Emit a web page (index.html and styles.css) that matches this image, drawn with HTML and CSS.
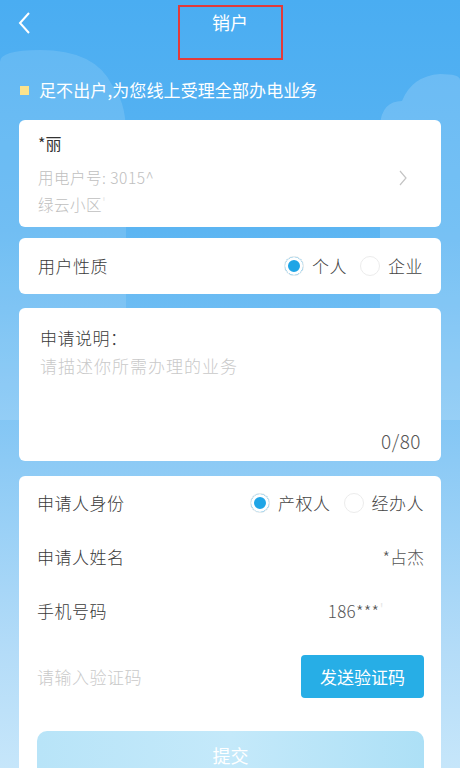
FILE: index.html
```html
<!DOCTYPE html>
<html lang="zh">
<head>
<meta charset="utf-8">
<link rel="stylesheet" href="styles.css">
</head>
<body>
<div class="page">
  <svg class="clouds" width="460" height="420" viewBox="0 0 460 420">
    <path d="M0,62 Q0,50 40,50 Q95,50 112,85 Q125,100 126,130 L126,420 L0,420 Z" fill="rgba(255,255,255,0.13)"/>
    <path d="M380,125 Q382,101 402,101 Q412,76 440,74 Q460,74 460,80 L460,420 L380,420 Z" fill="rgba(255,255,255,0.16)"/>
  </svg>
  <header class="header">
    <svg class="back" width="14" height="24" viewBox="0 0 14 24"><polyline points="11,2 2,12 11,22" fill="none" stroke="#fff" stroke-width="2"/></svg>
    <h1 class="title">销户</h1>
    <div class="mark"></div>
  </header>
  <div class="notice"><span class="dot"></span>足不出户,为您线上受理全部办电业务</div>

  <section class="card account">
    <div class="acc-info">
      <div class="acc-name">*丽</div>
      <div class="acc-sub">用电户号: 3015^</div>
      <div class="acc-sub addr">绿云小区<span class="faint">'</span></div>
    </div>
    <svg class="arrow" width="10" height="18" viewBox="0 0 10 18"><polyline points="2,2 8,9 2,16" fill="none" stroke="#c4c4c4" stroke-width="1.2"/></svg>
  </section>

  <section class="card row-card">
    <span class="label">用户性质</span>
    <div class="radios">
      <span class="radio on"></span><span class="opt">个人</span>
      <span class="radio"></span><span class="opt">企业</span>
    </div>
  </section>

  <section class="card desc">
    <div class="label">申请说明：</div>
    <div class="placeholder">请描述你所需办理的业务</div>
    <div class="count">0/80</div>
  </section>

  <section class="card form">
    <div class="frow">
      <span class="label">申请人身份</span>
      <div class="radios">
        <span class="radio on"></span><span class="opt">产权人</span>
        <span class="radio"></span><span class="opt">经办人</span>
      </div>
    </div>
    <div class="frow">
      <span class="label">申请人姓名</span>
      <span class="value">*占杰</span>
    </div>
    <div class="frow">
      <span class="label">手机号码</span>
      <span class="value phone">186***<span class="faint">'</span></span>
    </div>
    <div class="frow code">
      <span class="placeholder">请输入验证码</span>
      <button class="send">发送验证码</button>
    </div>
    <button class="submit">提交</button>
  </section>
</div>
</body>
</html>
```

FILE: styles.css
```css
* { box-sizing: border-box; }
html, body { margin: 0; padding: 0; }
body {
  width: 460px;
  height: 768px;
  overflow: hidden;
  font-family: "Noto Sans CJK SC", "Noto Sans", sans-serif;
  font-weight: 300;
  background: linear-gradient(180deg, #4aadf2 0%, #5cb5f2 30%, #8ccaf5 60%, #b4dcf8 85%, #c6e6fa 100%);
}
.page {
  position: relative;
  width: 460px;
  height: 768px;
}
.clouds {
  position: absolute;
  left: 0;
  top: 0;
  pointer-events: none;
}
.header {
  position: relative;
  height: 46px;
  display: flex;
  justify-content: center;
  align-items: flex-start;
}
.back {
  position: absolute;
  left: 18px;
  top: 11px;
}
.title {
  margin: 11px 0 0;
  font-size: 18px;
  line-height: 22px;
  font-weight: 400;
  color: #fff;
}
.mark {
  position: absolute;
  left: 178px;
  top: 5px;
  width: 105px;
  height: 55px;
  border: 2px solid #e23a3a;
}
.notice {
  position: relative;
  margin-top: 33px;
  padding-left: 20px;
  display: flex;
  align-items: center;
  gap: 10px;
  color: #fff;
  font-size: 17px;
  font-weight: 400;
  line-height: 22px;
  letter-spacing: 0.1px;
}
.dot {
  width: 9px;
  height: 9px;
  background: #fbe38d;
}
.card {
  position: relative;
  margin: 0 19px;
  background: #fff;
  border-radius: 6px;
}
.account {
  margin-top: 19px;
  padding: 12px 33px 12px 19px;
  display: flex;
  align-items: center;
  justify-content: space-between;
}
.acc-name {
  font-size: 16px;
  line-height: 22px;
  color: #333;
  font-weight: 400;
}
.acc-sub {
  margin-top: 12px;
  font-size: 15.5px;
  line-height: 22px;
  color: #c0c0c0;
  letter-spacing: 0.5px;
}
.acc-sub.addr { margin-top: 5px; }
.faint { color: #e6e6e6; }
.arrow { margin-top: 8px; }
.row-card {
  margin-top: 11px;
  height: 56px;
  padding: 0 18px 0 19px;
  display: flex;
  align-items: center;
  justify-content: space-between;
}
.label {
  font-size: 17px;
  line-height: 22px;
  color: #3a3a3a;
  letter-spacing: 0.5px;
}
.radios {
  display: flex;
  align-items: center;
}
.radio {
  width: 20px;
  height: 20px;
  border-radius: 50%;
  border: 1px solid #ececec;
  background: #fff;
  margin-right: 8px;
}
.radio.on {
  background: #1fa5e6;
  box-shadow: inset 0 0 0 3px #fff;
}
.opt {
  font-size: 17px;
  line-height: 22px;
  color: #444;
  letter-spacing: 0.5px;
  margin-right: 13px;
}
.opt:last-child { margin-right: 0; }
.desc {
  margin-top: 14px;
  height: 153px;
  padding: 19px 20px 9px 21px;
  display: flex;
  flex-direction: column;
}
.desc .placeholder {
  margin-top: 6px;
  font-size: 17px;
  letter-spacing: 1px;
}
.placeholder {
  font-size: 17px;
  line-height: 22px;
  color: #c9c9c9;
  letter-spacing: 0.5px;
}
.count {
  margin-top: auto;
  align-self: flex-end;
  font-size: 19px;
  line-height: 22px;
  color: #555;
  letter-spacing: 0.5px;
}
.form {
  margin-top: 15px;
  height: 320px;
  padding: 0 17px 0 18px;
  border-radius: 6px 6px 0 0;
}
.frow {
  height: 54px;
  display: flex;
  align-items: center;
  justify-content: space-between;
}
.value {
  font-size: 17px;
  line-height: 22px;
  color: #555;
}
.value.phone { margin-right: 40px; letter-spacing: 0.3px; }
.frow.code {
  margin-top: 17px;
  height: 43px;
}
.send {
  width: 123px;
  height: 43px;
  border: none;
  border-radius: 4px;
  background: #27aee6;
  color: #fff;
  font-family: inherit;
  font-weight: 400;
  font-size: 17px;
  padding: 0;
}
.submit {
  display: block;
  margin-top: 33px;
  width: 100%;
  height: 48px;
  border: none;
  border-radius: 10px;
  background: linear-gradient(90deg, #b8e4f8 0%, #c4e9fa 50%, #ade0f6 100%);
  color: #fff;
  font-family: inherit;
  font-weight: 400;
  font-size: 18px;
  padding: 0;
  line-height: 48px;
}
```
